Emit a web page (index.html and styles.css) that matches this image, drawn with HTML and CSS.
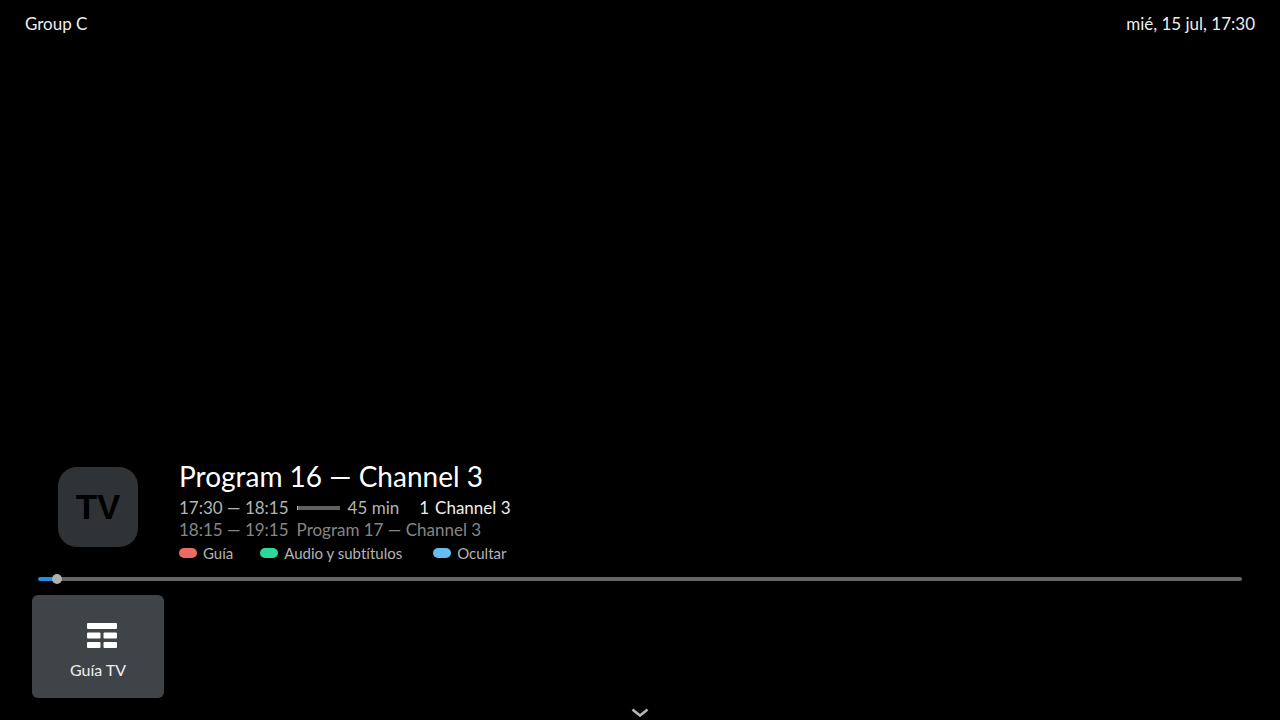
FILE: index.html
```html
<!DOCTYPE html>
<html lang="es">
<head>
    <meta charset="UTF-8">
    <meta name="viewport" content="width=device-width, initial-scale=1.0">
    <title>Program 16 — Channel 3</title>
    <link rel="stylesheet" href="styles.css">
</head>

<body>

    <!-- Top bar -->
    <header class="topbar">
        <span>Group C</span>
        <time>mié, 15 jul, 17:30</time>
    </header>

    <main class="overlay">

        <!-- Current programme -->
        <section class="info">
            <div class="logo">TV</div>
            <div class="details">
                <h1>Program 16 — Channel 3</h1>
                <div class="row now">
                    <span class="hours">17:30 — 18:15</span>
                    <progress class="elapsed" value="1" max="45" aria-label="Progreso"></progress>
                    <span class="duration">45 min</span>
                    <span class="channel"><span>1</span><span>Channel 3</span></span>
                </div>
                <div class="row next">
                    <span class="hours">18:15 — 19:15</span>
                    <span>Program 17 — Channel 3</span>
                </div>
                <div class="keys">
                    <button type="button"><i class="pill red"></i>Guía</button>
                    <button type="button"><i class="pill green"></i>Audio y subtítulos</button>
                    <button type="button"><i class="pill blue"></i>Ocultar</button>
                </div>
            </div>
        </section>

        <!-- Seek bar -->
        <input class="seek" type="range" min="0" max="1000" value="12" aria-label="Posición" style="--played: 1.5%">

        <!-- Actions -->
        <nav class="actions">
            <button type="button" class="card">
                <svg width="30" height="26" viewBox="0 0 30 26" fill="#fff" aria-hidden="true">
                    <rect x="0" y="0" width="30" height="6" rx="1"/>
                    <rect x="0" y="9.5" width="13.5" height="6" rx="1"/>
                    <rect x="16.5" y="9.5" width="13.5" height="6" rx="1"/>
                    <rect x="0" y="19" width="13.5" height="6" rx="1"/>
                    <rect x="16.5" y="19" width="13.5" height="6" rx="1"/>
                </svg>
                <span>Guía TV</span>
            </button>
        </nav>

        <button type="button" class="more" aria-label="Más">
            <svg width="18" height="10" viewBox="0 0 18 10" fill="none" stroke="#b4b4b4" stroke-width="2.6" aria-hidden="true">
                <path d="M1.5 1.5 L9 7.5 L16.5 1.5"/>
            </svg>
        </button>
    </main>

</body>
</html>
```
FILE: styles.css
```css
/* General */
* {
    box-sizing: border-box;
}

body {
    margin: 0;
    min-height: 100vh;
    display: flex;
    flex-direction: column;
    justify-content: space-between;
    background: #000;
    color: #eee;
    font-family: Lato, sans-serif;
    font-size: 17px;
    font-variant-ligatures: none;
    line-height: 22px;
}

button {
    padding: 0;
    border: 0;
    background: none;
    color: inherit;
    font: inherit;
    font-variant-ligatures: none;
    cursor: pointer;
}

svg {
    display: block;
}

/* Top bar */
.topbar {
    display: flex;
    justify-content: space-between;
    padding: 13px 25px;
}

.overlay {
    display: flex;
    flex-direction: column;
}

/* Programme info */
.info {
    display: flex;
    align-items: flex-start;
    gap: 41px;
    padding: 0 58px;
}

.logo {
    width: 80px;
    height: 80px;
    margin-top: 8px;
    border-radius: 19px;
    background: #303336;
    color: #000;
    font-family: "Liberation Sans", sans-serif;
    font-size: 35px;
    font-weight: 700;
    line-height: 80px;
    text-align: center;
}

h1 {
    margin: 0 0 4px;
    font-size: 28px;
    font-weight: 400;
    line-height: 34px;
    color: #fff;
}

.row {
    display: flex;
    align-items: center;
    gap: 8px;
}

.now {
    color: #b4b4b4;
}

.next {
    color: #868686;
}

.elapsed {
    appearance: none;
    width: 43px;
    height: 4px;
    border: 0;
    background: #606060;
}

.elapsed::-webkit-progress-bar {
    background: #606060;
}

.elapsed::-webkit-progress-value {
    background: #b4b4b4;
}

.channel {
    display: flex;
    gap: 6px;
    margin-left: 12px;
    color: #eee;
}

.keys {
    display: flex;
    gap: 27px;
    margin-top: 1px;
    margin-bottom: 1px;
    color: #b4b4b4;
}

.keys button {
    display: flex;
    align-items: center;
    gap: 6px;
    font-size: 15px;
}

.keys button:last-child {
    margin-left: 4px;
}

.pill {
    width: 18px;
    height: 10px;
    border-radius: 5px;
}

.red { background: #ec6a66; }
.green { background: #2bd9a0; }
.blue { background: #66bdf0; }

/* Seek bar */
.seek {
    appearance: none;
    height: 10px;
    margin: 9px 38px 11px;
    background: none;
}

.seek::-webkit-slider-runnable-track {
    height: 4px;
    border-radius: 2px;
    background: linear-gradient(to right, #1e90e8 var(--played), #666 var(--played));
}

.seek::-webkit-slider-thumb {
    appearance: none;
    width: 10px;
    height: 10px;
    margin-top: -3px;
    border-radius: 50%;
    background: #b0b0b0;
}

/* Actions */
.actions {
    display: flex;
    padding: 0 32px;
}

.card {
    display: flex;
    flex-direction: column;
    align-items: center;
    gap: 10px;
    width: 132px;
    padding: 28px 0 17px;
    border-radius: 6px;
    background: #3f4449;
    font-size: 16px;
}

.card svg {
    margin-left: 7px;
}

.more {
    align-self: center;
    margin-top: 8px;
    padding: 2px;
}
```
